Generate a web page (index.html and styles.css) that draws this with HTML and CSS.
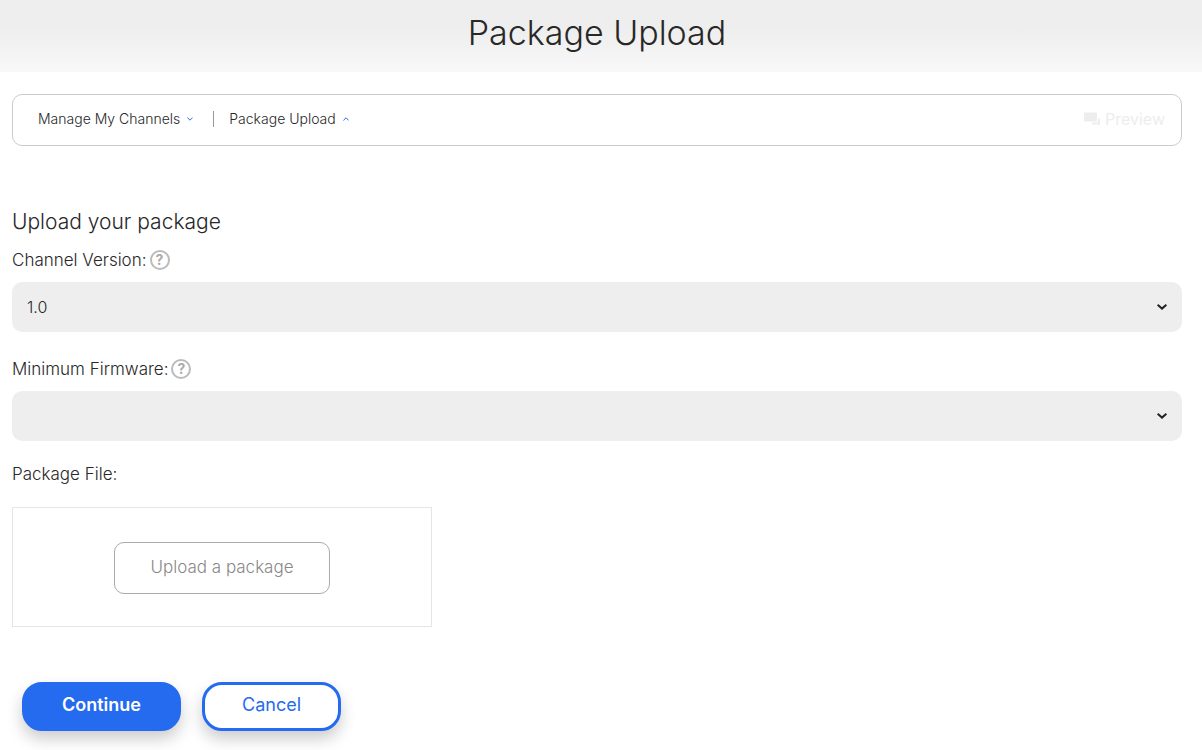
FILE: index.html
```html
<!DOCTYPE html>
<html lang="en">
<head>
<meta charset="utf-8">
<meta name="viewport" content="width=device-width, initial-scale=1">
<title>Package Upload</title>
<link rel="stylesheet" href="styles.css">
</head>
<body>
<header class="banner">
  <h1 class="banner-title">Package Upload</h1>
</header>
<main class="page">
  <nav class="toolbar" aria-label="Channel">
    <a class="crumb" href="#channels">Manage My Channels
      <svg class="caret" viewBox="0 0 6 4" aria-hidden="true"><path d="M.4.6 3 3.200 5.600.6"/></svg>
    </a>
    <span class="divider"></span>
    <a class="crumb" href="#upload">Package Upload
      <svg class="caret" viewBox="0 0 6 4" aria-hidden="true"><path d="M.4 3.400 3 .8 5.600 3.400"/></svg>
    </a>
    <a class="preview" href="#preview">
      <svg class="preview-icon" viewBox="0 0 16 14" aria-hidden="true"><path d="M1.200.5h10.600a1.200 1.200 0 0 1 1.200 1.200v6.600a1.200 1.200 0 0 1-1.200 1.200H1.200A1.200 1.200 0 0 1 0 8.300V1.700A1.200 1.200 0 0 1 1.200.5zM14 6.500h1a1 1 0 0 1 1 1v4a1 1 0 0 1-1 1v1.200l-1.700-1.200H9a1 1 0 0 1-1-1v-1h5a1 1 0 0 0 1-1z"/></svg>
      Preview
    </a>
  </nav>

  <form class="form">
    <h2 class="form-title">Upload your package</h2>

    <div class="label-row">
      <label for="version">Channel Version:</label>
      <button class="help" type="button" aria-label="About channel version">?</button>
    </div>
    <div class="select-box">
      <select class="select" id="version"><option>1.0</option></select>
      <svg class="chevron" viewBox="0 0 10 6" aria-hidden="true"><path d="M.6.8 5 4.600 9.400.8"/></svg>
    </div>

    <div class="label-row">
      <label for="firmware">Minimum Firmware:</label>
      <button class="help" type="button" aria-label="About minimum firmware">?</button>
    </div>
    <div class="select-box">
      <select class="select" id="firmware"><option></option></select>
      <svg class="chevron" viewBox="0 0 10 6" aria-hidden="true"><path d="M.6.8 5 4.600 9.400.8"/></svg>
    </div>

    <div class="file-label" id="file-label">Package File:</div>
    <div class="dropzone" role="group" aria-labelledby="file-label">
      <button class="upload" type="button">Upload a package</button>
    </div>

    <div class="actions">
      <button class="action action-primary" type="submit">Continue</button>
      <button class="action action-secondary" type="button">Cancel</button>
    </div>
  </form>
</main>
</body>
</html>
```

FILE: styles.css
```css
* {
  box-sizing: border-box;
}

body {
  margin: 0;
  background: #fff;
  color: #282828;
  font-family: Inter, "Open Sans", sans-serif;
  font-size: 17px;
  font-weight: 300;
  line-height: 20px;
}

button,
select {
  font: inherit;
}

.banner {
  padding: 13px 20px 19px 12px;
  background: linear-gradient(#ededed 0%, #eee 40%, #f8f8f8 100%);
  text-align: center;
}

.banner-title {
  margin: 0;
  font-size: 34px;
  font-weight: 300;
  line-height: 40px;
}

.page {
  padding: 22px 20px 19px 12px;
}

.toolbar {
  display: flex;
  align-items: center;
  min-height: 52px;
  padding: 0 16px 3px 25px;
  border: 1px solid #ccc;
  border-radius: 10px;
}

.crumb {
  display: flex;
  align-items: center;
  gap: 7px;
  color: #282828;
  font-size: 14px;
  text-decoration: none;
}

.caret {
  width: 6px;
  height: 4px;
  fill: none;
  stroke: #246bf0;
}

.divider {
  width: 1px;
  height: 16px;
  margin: 0 15px 0 20px;
  background: #999;
}

.preview {
  display: flex;
  align-items: center;
  gap: 5px;
  margin-left: auto;
  color: #ededed;
  font-size: 16px;
  font-weight: 400;
  text-decoration: none;
}

.preview-icon {
  width: 16px;
  height: 14px;
  fill: #ededed;
}

.form-title {
  margin: 64px 0 12px;
  font-size: 21px;
  font-weight: 300;
  line-height: 24px;
}

.label-row {
  display: flex;
  align-items: center;
  gap: 3px;
  padding: 4px 0;
}

.help {
  width: 20px;
  height: 20px;
  padding: 0;
  border: 2px solid #bbb;
  border-radius: 50%;
  background: none;
  color: #aaa;
  font-size: 14px;
  font-weight: 700;
  line-height: 16px;
}

.select-box {
  display: grid;
  align-items: center;
  margin: 8px 0 23px;
}

.select {
  grid-area: 1 / 1;
  width: 100%;
  height: 50px;
  padding: 0 40px 0 15px;
  border: 0;
  border-radius: 10px;
  appearance: none;
  background: #eee;
  color: #282828;
  font-size: 16px;
}

.chevron {
  grid-area: 1 / 1;
  justify-self: end;
  width: 10px;
  height: 6px;
  margin-right: 15px;
  fill: none;
  stroke: #222;
  stroke-width: 2;
  pointer-events: none;
}

.file-label {
  margin-bottom: 23px;
}

.dropzone {
  display: flex;
  align-items: center;
  justify-content: center;
  max-width: 420px;
  min-height: 120px;
  padding-top: 2px;
  border: 1px solid #e5e5e5;
}

.upload {
  padding: 14px 35px 16px;
  border: 1px solid #aaa;
  border-radius: 10px;
  background: #fff;
  color: #888;
}

.actions {
  display: flex;
  gap: 21px;
  padding: 55px 10px 0;
}

.action {
  padding: 9px 37px 12px;
  border: 3px solid #246bf0;
  border-radius: 20px;
  box-shadow: 0 8px 16px rgba(0, 0, 0, 0.2);
  font-size: 18px;
  line-height: 22px;
}

.action-primary {
  background: #246bf0;
  color: #fff;
  font-weight: 600;
}

.action-secondary {
  background: #fff;
  color: #246bf0;
  font-weight: 400;
}
```
